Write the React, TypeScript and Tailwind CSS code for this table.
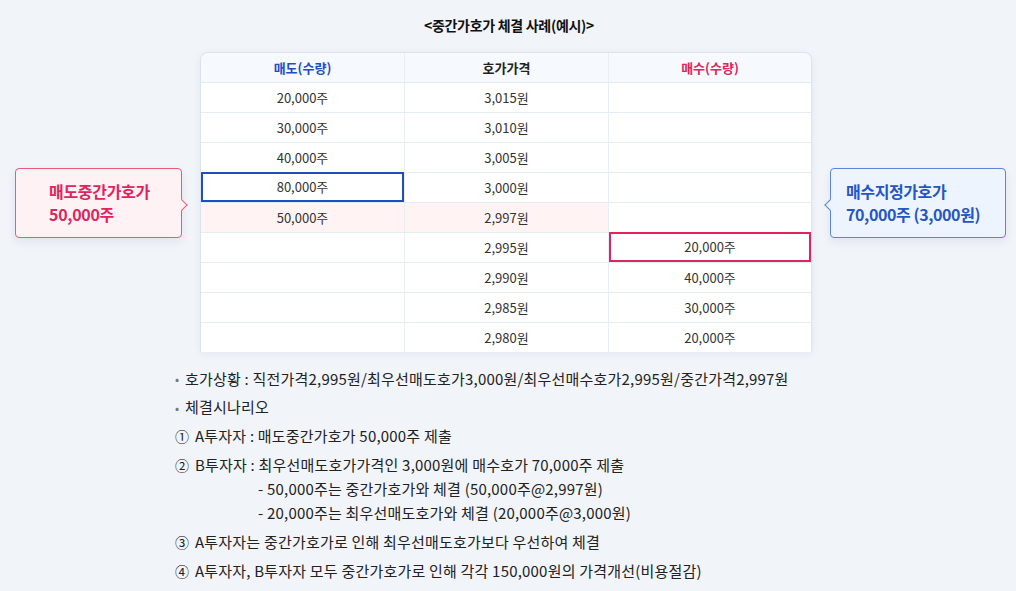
import React from "react";

const F = { fontFamily: '"Noto Sans CJK KR", "Noto Sans", sans-serif' };

type Row = { sell: string; price: string; buy: string; sellBox?: boolean; buyBox?: boolean; pink?: boolean };

const rows: Row[] = [
  { sell: "20,000주", price: "3,015원", buy: "" },
  { sell: "30,000주", price: "3,010원", buy: "" },
  { sell: "40,000주", price: "3,005원", buy: "" },
  { sell: "80,000주", price: "3,000원", buy: "", sellBox: true },
  { sell: "50,000주", price: "2,997원", buy: "", pink: true },
  { sell: "", price: "2,995원", buy: "20,000주", buyBox: true },
  { sell: "", price: "2,990원", buy: "40,000주" },
  { sell: "", price: "2,985원", buy: "30,000주" },
  { sell: "", price: "2,980원", buy: "20,000주" },
];

export default function App() {
  return (
    <div className="w-[1016px] h-[591px] bg-[#f1f4f9] text-[#222] overflow-hidden" style={F}>
      <div className="relative flex flex-col items-center pt-[15px]">
        <div className="text-[14px] font-bold leading-[20px] text-[#111] tracking-[-0.3px] pl-[2px]">
          &lt;중간가호가 체결 사례(예시)&gt;
        </div>
        <div className="mt-[17px] w-[612px] h-[300px] ml-[-4px] overflow-hidden rounded-t-[8px] border border-b-0 border-[#dbe3ee] bg-white shadow-[0_2px_8px_rgba(30,50,90,0.06)]">
          <div className="grid grid-cols-[204px_204px_1fr] h-[30px] bg-[#f6f9fd] border-b border-[#e3eaf3] text-[13px] font-bold">
            <div className="flex items-center justify-center text-[#1d4fc0] border-r border-[#e9eef5]">매도(수량)</div>
            <div className="flex items-center justify-center text-[#222] border-r border-[#e9eef5]">호가가격</div>
            <div className="flex items-center justify-center text-[#e0245e]">매수(수량)</div>
          </div>
          {rows.map((r, i) => (
            <div key={i} className="grid grid-cols-[204px_204px_1fr] h-[30px] border-b border-[#e6ecf4] text-[13px] text-[#333]">
              <div className={`flex items-center justify-center border-r border-[#e9eef5] ${r.pink ? "bg-[#fff3f3]" : ""}`}>
                {r.sellBox ? (
                  <div className="w-full h-[30px] mt-[-1px] border-2 border-[#1d4fc0] flex items-center justify-center">{r.sell}</div>
                ) : (
                  r.sell
                )}
              </div>
              <div className={`flex items-center justify-center border-r border-[#e9eef5] ${r.pink ? "bg-[#fff3f3]" : ""}`}>{r.price}</div>
              <div className="flex items-center justify-center">
                {r.buyBox ? (
                  <div className="w-full h-[30px] mt-[-1px] border-2 border-[#e0245e] flex items-center justify-center">{r.buy}</div>
                ) : (
                  r.buy
                )}
              </div>
            </div>
          ))}
        </div>

        <div className="absolute left-[15px] top-[168px] w-[167px] h-[70px] rounded-[4px] border border-[#ea5a7b] bg-[#fff2f4] shadow-[0_4px_10px_rgba(30,50,90,0.08)] flex flex-col justify-center pl-[33px] text-[16px] font-bold text-[#e0245e] leading-[23px] tracking-[-0.3px]">
          <div>매도중간가호가</div>
          <div>50,000주</div>
          <div className="absolute right-[-5px] top-[32px] w-[8px] h-[8px] rotate-45 bg-[#fff2f4] border-t border-r border-[#ea5a7b]" />
        </div>

        <div className="absolute left-[830px] top-[168px] w-[176px] h-[70px] rounded-[4px] border border-[#5b86db] bg-[#eef4fd] shadow-[0_4px_10px_rgba(30,50,90,0.08)] flex flex-col justify-center pl-[15px] text-[16px] font-bold text-[#2456c4] leading-[23px] tracking-[-0.4px]">
          <div>매수지정가호가</div>
          <div>70,000주 (3,000원)</div>
          <div className="absolute left-[-5px] top-[32px] w-[8px] h-[8px] rotate-45 bg-[#eef4fd] border-b border-l border-[#5b86db]" />
        </div>
      </div>

      <div className="pl-[175px] mt-[13px] text-[15px] text-[#222] tracking-[0.2px]">
        <div className="h-[28px] flex items-center">
          <span className="text-[#777] w-[10px] text-[12px]">•</span>
          <span>호가상황 : 직전가격2,995원/최우선매도호가3,000원/최우선매수호가2,995원/중간가격2,997원</span>
        </div>
        <div className="h-[29px] flex items-center">
          <span className="text-[#777] w-[10px] text-[12px]">•</span>
          <span>체결시나리오</span>
        </div>
        <div className="h-[29px] flex items-center">
          <span className="w-[20px] text-[14px]">①</span>
          <span>A투자자 : 매도중간가호가 50,000주 제출</span>
        </div>
        <div className="h-[26px] flex items-center pt-[3px]">
          <span className="w-[20px] text-[14px]">②</span>
          <span>B투자자 : 최우선매도호가가격인 3,000원에 매수호가 70,000주 제출</span>
        </div>
        <div className="h-[24px] flex items-center pl-[83px]">- 50,000주는 중간가호가와 체결 (50,000주@2,997원)</div>
        <div className="h-[24px] flex items-center pl-[83px]">- 20,000주는 최우선매도호가와 체결 (20,000주@3,000원)</div>
        <div className="h-[29px] flex items-center pt-[5px]">
          <span className="w-[20px] text-[14px]">③</span>
          <span>A투자자는 중간가호가로 인해 최우선매도호가보다 우선하여 체결</span>
        </div>
        <div className="h-[29px] flex items-center pt-[5px]">
          <span className="w-[20px] text-[14px]">④</span>
          <span>A투자자, B투자자 모두 중간가호가로 인해 각각 150,000원의 가격개선(비용절감)</span>
        </div>
      </div>
    </div>
  );
}
